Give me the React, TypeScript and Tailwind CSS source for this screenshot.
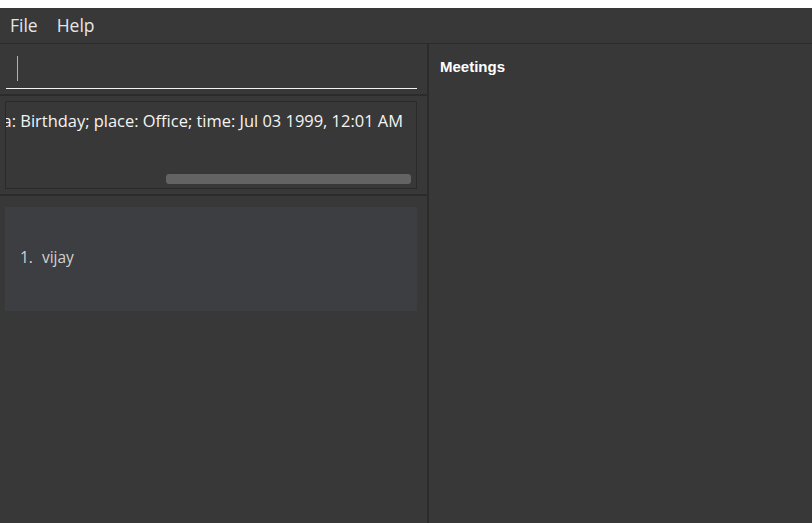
import React from "react";

export default function App() {
  return (
    <div className="w-[812px] h-[523px] flex flex-col bg-white overflow-hidden" style={{ fontFamily: '"Open Sans", "Noto Sans", sans-serif' }}>
      <div className="h-[8px] bg-white shrink-0" />
      <div className="h-[35px] shrink-0 bg-[#383838] flex items-center pl-[10px] gap-[19px] text-[17.5px] text-[#e6e6e6] border-b border-[#2b2b2b] box-content">
        <span>File</span>
        <span>Help</span>
      </div>
      <div className="flex-1 flex min-h-0 bg-[#383838]">
        {/* left column */}
        <div className="w-[427px] shrink-0 flex flex-col">
          {/* command box */}
          <div className="h-[50px] shrink-0 relative">
            <div className="absolute left-[17px] top-[12px] w-[1px] h-[25px] bg-[#b0b0b0]" />
            <div className="absolute left-[6px] top-[44px] w-[411px] h-[1px] bg-[#f2f2f2]" />
          </div>
          <div className="h-[2px] shrink-0 bg-[#2b2b2b]" />
          {/* result display */}
          <div className="h-[98px] shrink-0 px-[5px] pt-[5px]">
            <div className="h-[88px] w-[412px] border border-[#2a2a2a] relative overflow-hidden">
              <div className="absolute right-[13px] top-[8px] whitespace-nowrap text-[16.45px] text-[#f4f4f4] leading-[22px]">
                a: Birthday; place: Office; time: Jul 03 1999, 12:01 AM
              </div>
              <div className="absolute left-[160px] top-[72px] w-[245px] h-[10px] rounded-[3px] bg-[#636363]" />
            </div>
          </div>
          <div className="h-[2px] shrink-0 bg-[#2b2b2b]" />
          {/* list */}
          <div className="flex-1 px-[5px] pt-[11px]">
            <div className="h-[104px] w-[412px] bg-[#3d3e41] flex items-center pl-[15px] pb-[2px] text-[15.5px] text-[#d2d2d2]">
              <span>1.</span>
              <span className="ml-[9px]">vijay</span>
            </div>
          </div>
        </div>
        <div className="w-[2px] shrink-0 bg-[#2b2b2b]" />
        {/* right column */}
        <div className="flex-1 pl-[11px] pt-[13px]">
          <div className="text-[15px] font-bold text-white leading-[20px]" style={{ fontFamily: '"Liberation Sans", Arial, sans-serif' }}>
            Meetings
          </div>
        </div>
      </div>
    </div>
  );
}
